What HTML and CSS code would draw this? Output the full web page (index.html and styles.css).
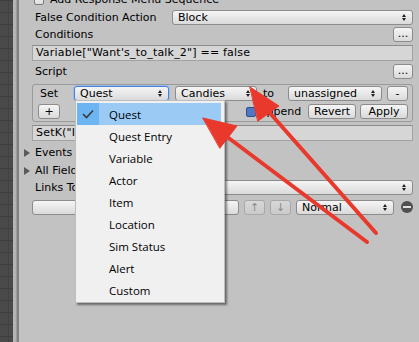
FILE: index.html
```html
<!DOCTYPE html>
<html lang="en">
<head>
    <meta charset="UTF-8">
    <title>Dialogue Entry Inspector</title>
    <link rel="stylesheet" href="styles.css">
</head>
<body>
    <div class="window">
        <div class="scene"></div>
        <div class="split"></div>

        <div class="inspector">
            <div class="row r-top">
                <span class="check"></span>
                <span class="label">Add Response Menu Sequence</span>
            </div>

            <div class="row r-false">
                <span class="label action-label">False Condition Action</span>
                <div class="popup grow"><span>Block</span><i class="arr"></i></div>
            </div>

            <div class="row r-cond">
                <span class="label grow">Conditions</span>
                <div class="btn dots">...</div>
            </div>

            <div class="field r-field">Variable["Want's_to_talk_2"] == false</div>

            <div class="row r-script">
                <span class="label grow">Script</span>
                <div class="btn dots">...</div>
            </div>

            <div class="box">
                <div class="box-row">
                    <span class="set-label">Set</span>
                    <div class="popup focus w-quest"><span>Quest</span><i class="arr"></i></div>
                    <div class="popup w-candies"><span>Candies</span><i class="arr"></i></div>
                    <span class="to-label">to</span>
                    <div class="popup w-unassigned"><span>unassigned</span><i class="arr"></i></div>
                    <div class="btn w-small">-</div>
                </div>
                <div class="box-row second">
                    <div class="btn w-small plus">+</div>
                    <span class="grow"></span>
                    <span class="append"><span class="check on"></span>Append</span>
                    <div class="btn w-apply">Revert</div>
                    <div class="btn w-apply">Apply</div>
                </div>
            </div>

            <div class="field r-setk">SetK("I</div>

            <div class="row r-events">
                <i class="fold"></i><span class="label">Events</span>
            </div>
            <div class="row r-fields">
                <i class="fold"></i><span class="label">All Fields</span>
            </div>
            <div class="row r-links">
                <span class="label links-label">Links To:</span>
                <div class="popup grow"><span></span><i class="arr"></i></div>
            </div>

            <div class="row r-link">
                <div class="btn grow"></div>
                <div class="btn w-move off">↑</div>
                <div class="btn w-move off">↓</div>
                <div class="popup w-priority"><span>Normal</span><i class="arr"></i></div>
                <span class="remove"></span>
            </div>
        </div>
    </div>

    <div class="menu">
        <div class="menu-item active"><span class="tick"><svg width="12" height="10" viewBox="0 0 12 10"><polyline points="1,5 4.5,8.5 11,1.5" fill="none" stroke="#3a3a3a" stroke-width="1.6"/></svg></span>Quest</div>
        <div class="menu-item"><span class="tick"></span>Quest Entry</div>
        <div class="menu-item"><span class="tick"></span>Variable</div>
        <div class="menu-item"><span class="tick"></span>Actor</div>
        <div class="menu-item"><span class="tick"></span>Item</div>
        <div class="menu-item"><span class="tick"></span>Location</div>
        <div class="menu-item"><span class="tick"></span>Sim Status</div>
        <div class="menu-item"><span class="tick"></span>Alert</div>
        <div class="menu-item"><span class="tick"></span>Custom</div>
    </div>

    <!-- red annotation arrows -->
    <svg class="marks" width="419" height="342" viewBox="0 0 419 342">
        <g stroke="#e8392c" stroke-width="4" stroke-linecap="round" fill="#e8392c">
            <line x1="367" y1="242" x2="226" y2="136"/>
            <polygon points="203,118 237,126 220,148" stroke-width="1" stroke-linejoin="round"/>
            <line x1="376" y1="233" x2="269" y2="112"/>
            <polygon points="250,87 279,106 258,121" stroke-width="1" stroke-linejoin="round"/>
        </g>
    </svg>
</body>
</html>
```

FILE: styles.css
```css
body {
    margin: 0;
    width: 419px;
    height: 342px;
    overflow: hidden;
    position: relative;
    background-color: #c2c2c2;
    font-family: "DejaVu Sans", sans-serif;
    font-size: 11px;
    color: #000;
}

.window {
    display: flex;
    height: 342px;
}

.scene {
    width: 13px;
    background-color: #4a4a4a;
    background-image:
        repeating-linear-gradient(to bottom, #3e3e3e 0 1px, transparent 1px 12px),
        linear-gradient(to right, transparent 0 8px, #424242 8px 9px, transparent 9px);
}

.split {
    width: 6px;
    background: linear-gradient(to right, #b4b4b4 0 3px, #9d9d9d 3px 4px, #808080 4px 6px);
}

.inspector {
    flex: 1;
    padding: 0 6px 0 13px;
    margin-top: -8px;
}

.row {
    display: flex;
    align-items: center;
    height: 15px;
}

.grow {
    flex: 1;
}

.label {
    padding-left: 3px;
    white-space: nowrap;
}

.action-label {
    width: 137px;
}

.links-label {
    width: 120px;
}

.r-false { margin-top: 3px; }
.r-cond { margin-top: 2px; }
.r-field { margin-top: 3px; }
.r-script { margin-top: 3px; }
.box { margin-top: 5px; }
.r-setk { margin-top: 3px; }
.r-events { margin-top: 4px; }
.r-fields { margin-top: 3px; }
.r-links { margin-top: 2px; }
.r-link { margin-top: 4px; height: 16px; }

.check {
    display: inline-block;
    width: 10px;
    height: 10px;
    margin-left: 2px;
    margin-right: 3px;
    box-sizing: border-box;
    border: 1px solid #7c7c7c;
    border-radius: 2px;
    background: linear-gradient(#f6f6f6, #dcdcdc);
}

.check.on {
    margin: 0 3px 0 0;
    background: #4f78c4;
    border-color: #2f4f8c;
}

.popup,
.btn {
    height: 15px;
    box-sizing: border-box;
    border: 1px solid #8c8c8c;
    border-radius: 3px;
    background: linear-gradient(#f5f5f5, #dadada);
    white-space: nowrap;
}

.popup {
    display: flex;
    align-items: center;
    justify-content: space-between;
    padding: 0 6px 0 5px;
}

.popup.focus {
    border-color: #4a7fd6;
    box-shadow: 0 0 0 1px #9dbbe9;
}

.arr {
    display: flex;
    flex-direction: column;
    gap: 1px;
}

.arr::before,
.arr::after {
    content: "";
    width: 0;
    height: 0;
    border-left: 2px solid transparent;
    border-right: 2px solid transparent;
}

.arr::before {
    border-bottom: 3px solid #1e1e1e;
}

.arr::after {
    border-top: 3px solid #1e1e1e;
}

.btn {
    display: flex;
    align-items: center;
    justify-content: center;
    line-height: 1;
}

.dots {
    width: 20px;
    padding-bottom: 3px;
}

.field {
    height: 16px;
    box-sizing: border-box;
    padding-left: 3px;
    line-height: 14px;
    letter-spacing: 0.2px;
    border: 1px solid #a2a2a2;
    border-top-color: #8c8c8c;
    background-color: #d6d6d6;
    white-space: nowrap;
    overflow: hidden;
}

.box {
    height: 38px;
    box-sizing: border-box;
    padding: 1px 4px 0 7px;
    border: 1px solid #9a9a9a;
    border-radius: 3px;
    background-color: #c6c6c6;
}

.box-row {
    display: flex;
    align-items: center;
    height: 15px;
}

.box-row.second {
    margin-top: 3px;
}

.set-label {
    width: 34px;
}

.to-label {
    width: 25px;
    padding-left: 6px;
}

.w-quest { width: 95px; }
.w-candies { width: 82px; margin-left: 6px; }
.w-unassigned { width: 94px; }
.w-small { width: 21px; margin-left: 5px; }
.w-apply { width: 48px; margin-left: 4px; }

.plus {
    margin-left: -2px;
    width: 22px;
}

.append {
    display: flex;
    align-items: center;
    width: 58px;
}

.fold {
    width: 0;
    height: 0;
    margin-left: -8px;
    margin-right: 2px;
    border-top: 4px solid transparent;
    border-bottom: 4px solid transparent;
    border-left: 6px solid #5a5a5a;
}

.w-move {
    width: 21px;
    margin-left: 5px;
}

.btn.off {
    color: #8a8a8a;
    border-color: #a8a8a8;
    background: linear-gradient(#d8d8d8, #cacaca);
}

.w-priority {
    width: 98px;
    margin-left: 5px;
}

.remove {
    display: flex;
    align-items: center;
    justify-content: center;
    width: 12px;
    height: 12px;
    margin-left: 7px;
    border-radius: 50%;
    background-color: #505050;
}

.remove::after {
    content: "";
    width: 8px;
    height: 2px;
    background-color: #e0e0e0;
}

/* windows style popup menu */
.menu {
    position: absolute;
    left: 75px;
    top: 100px;
    width: 150px;
    height: 203px;
    box-sizing: border-box;
    padding: 2px 2px 0 1px;
    border: 1px solid #bdbdbd;
    background-color: #f0f0f0;
    box-shadow: 2px 2px 2px rgba(0, 0, 0, 0.45);
    font-family: "Open Sans", sans-serif;
    font-size: 11.5px;
}

.menu-item {
    display: flex;
    align-items: center;
    height: 22px;
}

.tick {
    display: flex;
    align-items: center;
    justify-content: center;
    width: 22px;
    height: 22px;
    margin-right: 10px;
}

.menu-item.active {
    background-color: #9bcbf5;
    margin-right: 1px;
}

.menu-item.active .tick {
    background-color: #6db4f2;
}

.marks {
    position: absolute;
    left: 0;
    top: 0;
}
```
